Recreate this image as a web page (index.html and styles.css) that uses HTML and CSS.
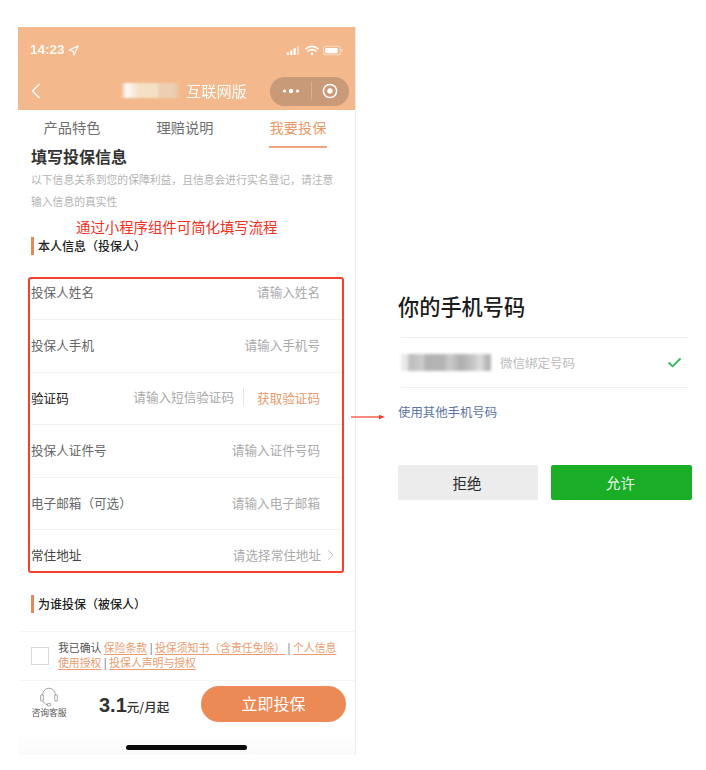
FILE: index.html
```html
<!DOCTYPE html>
<html lang="zh">
<head>
<meta charset="utf-8">
<title>小程序组件</title>
<link rel="stylesheet" href="styles.css">
</head>
<body>
<div class="canvas">
  <section class="phone">
    <header class="head">
      <div class="status">
        <div class="time">14:23
          <svg class="loc" width="11" height="11" viewBox="0 0 10 10"><path d="M9.200.8 1 4.600l3.600.8.8 3.700z" fill="none" stroke="#fff" stroke-width="1.100" stroke-linejoin="round"/></svg>
        </div>
        <div class="sys">
          <svg width="15" height="9" viewBox="0 0 12 8" fill="#fff"><rect x="0" y="5.500" width="2" height="2.500" rx=".4"/><rect x="3" y="4" width="2" height="4" rx=".4"/><rect x="6" y="2" width="2" height="6" rx=".4"/><rect x="9" y="0" width="2" height="8" rx=".4" opacity=".45"/></svg>
          <svg width="14" height="11" viewBox="0 0 13 10" fill="none" stroke="#fff" stroke-linecap="round"><path d="M1 3.400a7.800 7.800 0 0 1 11 0" stroke-width="1.500"/><path d="M3 5.600a5 5 0 0 1 7 0" stroke-width="1.500"/><circle cx="6.500" cy="8" r="1.100" fill="#fff" stroke="none"/></svg>
          <svg width="21" height="11" viewBox="0 0 20 10"><rect x=".5" y="1" width="16" height="8" rx="2.200" fill="none" stroke="#fff" stroke-opacity=".5"/><rect x="2" y="2.500" width="12" height="5" rx="1" fill="#fff"/><rect x="17.600" y="3.600" width="1.200" height="2.800" rx=".6" fill="#fff" fill-opacity=".5"/></svg>
        </div>
      </div>
      <div class="nav">
        <svg class="back" width="10" height="16" viewBox="0 0 10 16"><path d="M8.500 1 1.500 8l7 7" fill="none" stroke="#fff" stroke-width="1.400"/></svg>
        <div class="nav-title"><span class="smudge"></span>互联网版</div>
        <div class="capsule">
          <svg width="18" height="6" viewBox="0 0 18 6" fill="#fff"><circle cx="2.500" cy="3" r="1.600"/><circle cx="9" cy="3" r="2.200"/><circle cx="15.500" cy="3" r="1.600"/></svg>
          <span class="cap-div"></span>
          <svg width="16" height="16" viewBox="0 0 16 16"><circle cx="8" cy="8" r="6.600" fill="none" stroke="#fff" stroke-width="1.500"/><circle cx="8" cy="8" r="2.700" fill="#fff"/></svg>
        </div>
      </div>
    </header>

    <nav class="tabs">
      <div class="tab">产品特色</div>
      <div class="tab">理赔说明</div>
      <div class="tab on">我要投保</div>
    </nav>

    <main class="content">
      <h1 class="form-title">填写投保信息</h1>
      <p class="intro">以下信息关系到您的保障利益，且信息会进行实名登记，请注意</p>
      <p class="intro">输入信息的真实性</p>
      <p class="note">通过小程序组件可简化填写流程</p>
      <h2 class="sec">本人信息（投保人）</h2>
      <div class="box">
        <div class="row first"><span class="lab">投保人姓名</span><span class="ph">请输入姓名</span></div>
        <div class="row"><span class="lab">投保人手机</span><span class="ph">请输入手机号</span></div>
        <div class="row"><span class="lab dark">验证码</span><span class="ph code">请输入短信验证码</span><span class="get">获取验证码</span></div>
        <div class="row"><span class="lab">投保人证件号</span><span class="ph">请输入证件号码</span></div>
        <div class="row"><span class="lab">电子邮箱（可选）</span><span class="ph">请输入电子邮箱</span></div>
        <div class="row last"><span class="lab dark2">常住地址</span><span class="ph addr">请选择常住地址</span>
          <svg class="chev" width="7" height="12" viewBox="0 0 7 12"><path d="M1 1l5 5-5 5" fill="none" stroke="#c4c4c4" stroke-width="1"/></svg>
        </div>
      </div>
      <h2 class="sec sec2">为谁投保（被保人）</h2>
    </main>

    <div class="agree">
      <span class="check"></span>
      <div class="terms">
        <p class="line"><span>我已确认</span> <a>保险条款</a> <i>|</i> <a>投保须知书（含责任免除）</a> <i>|</i> <a>个人信息</a></p>
        <p class="line"><a>使用授权</a> <i>|</i> <a>投保人声明与授权</a></p>
      </div>
    </div>

    <footer class="bar">
      <div class="service">
        <svg width="20" height="20" viewBox="0 0 20 21" fill="none" stroke="#8a8a8a" stroke-width=".8"><path d="M3.500 9V7.800a6.500 6.500 0 0 1 13 0V9"/><rect x="1.200" y="8" width="2.800" height="7" rx="1.300"/><rect x="16" y="8" width="2.800" height="7" rx="1.300"/><path d="M4 15c1 2.600 3 3.500 5 3.500"/><rect x="8" y="17.300" width="4" height="2.400" rx="1.200"/></svg>
        <span>咨询客服</span>
      </div>
      <div class="price"><b>3.1</b><span class="yuan">元</span><span class="per">/月起</span></div>
      <button class="buy">立即投保</button>
    </footer>
    <div class="home"><span class="home-bar"></span></div>
  </section>

  <section class="auth">
    <h2 class="auth-title">你的手机号码</h2>
    <div class="num-row">
      <span class="blur-num"></span>
      <span class="num-note">微信绑定号码</span>
      <svg class="tick" width="15" height="11" viewBox="0 0 15 11"><path d="M1.500 5.500 5.500 9.300 13.500 1.500" fill="none" stroke="#2fb95a" stroke-width="1.800"/></svg>
    </div>
    <a class="other">使用其他手机号码</a>
    <div class="btns">
      <button class="btn no">拒绝</button>
      <button class="btn yes">允许</button>
    </div>
    <svg class="arrow" width="34" height="6" viewBox="0 0 34 6"><path d="M0 3h29" stroke="#f0402c" stroke-width="1.200"/><path d="M28 .8 34 3l-6 2.200z" fill="#f0402c"/></svg>
  </section>
</div>
</body>
</html>
```
FILE: styles.css
```css
* { box-sizing: border-box; }
html, body { margin: 0; padding: 0; background: #fff; }
body {
  width: 706px;
  height: 770px;
  overflow: hidden;
  font-family: "Noto Sans CJK SC", "Liberation Sans", sans-serif;
}
h1, h2, p { margin: 0; font-weight: normal; }
.canvas {
  display: flex;
  align-items: flex-start;
  padding: 27px 0 0 18px;
}

/* phone */
.phone {
  width: 338px;
  height: 728px;
  display: flex;
  flex-direction: column;
  border-right: 1px solid #ececec;
  background: #fff;
  flex: none;
}
.head { background: #f3b88c; height: 83px; flex: none; }
.status {
  height: 46px;
  padding: 15px 11px 0 12px;
  display: flex;
  justify-content: space-between;
  align-items: flex-start;
  color: #fff;
}
.time {
  font-family: "Liberation Sans", sans-serif;
  font-size: 13.500px;
  line-height: 16px;
  font-weight: bold;
  display: flex;
  align-items: center;
  gap: 3px;
  opacity: .93;
}
.sys { display: flex; align-items: center; gap: 4px; padding-top: 3px; }
.nav {
  height: 30px;
  display: flex;
  align-items: center;
  padding: 0 6px 0 13px;
  margin-top: 3px;
}
.back { flex: none; }
.nav-title {
  color: #fff;
  font-size: 15.200px;
  line-height: 28px;
  padding-bottom: 2px;
  display: flex;
  align-items: center;
  margin-left: 80px;
  flex: 1;
  opacity: .95;
}
.smudge {
  width: 65px;
  height: 15px;
  background: linear-gradient(90deg, #f3b88c 0, #fff 8%, #f5e3c8 28%, #f5e3c8 55%, #eccfb4 60%, #ecd2b8 80%, #f3b88c 92%);
  filter: blur(1px);
}
.capsule {
  width: 79px;
  height: 29px;
  border-radius: 15px;
  background: #c89a78;
  display: flex;
  align-items: center;
  justify-content: space-between;
  padding: 0 11px 0 12px;
  flex: none;
}
.cap-div { width: 1px; height: 18px; background: rgba(255,255,255,.22); }

/* tabs */
.tabs {
  height: 38px;
  flex: none;
  display: flex;
  padding-left: 25px;
  gap: 55px;
}
.tab {
  width: 58px;
  font-size: 14.200px;
  line-height: 35px;
  height: 38px;
  text-align: center;
  color: #6e6e6e;
  white-space: nowrap;
}
.tab.on { color: #e99a68; border-bottom: 2px solid #f0a67a; }

/* form */
.content { padding: 0 0 0 13px; height: 483px; flex: none; }
.form-title {
  font-size: 16px;
  line-height: 20px;
  font-weight: 700;
  color: #333;
  margin-top: -2px;
}
.intro {
  font-size: 10.800px;
  line-height: 22px;
  color: #b4b4b4;
  white-space: nowrap;
}
.form-title + .intro { margin-top: 2px; }
.note {
  font-size: 14.400px;
  line-height: 20px;
  color: #f2301e;
  margin: 5px 0 0 45px;
}
.sec {
  font-size: 12px;
  line-height: 18px;
  font-weight: 500;
  color: #222;
  border-left: 3px solid #e5875a;
  padding-left: 4px;
}
.box {
  width: 316px;
  height: 296px;
  margin: 22px 0 0 -3px;
  border: 2px solid #f4402f;
  border-radius: 3px;
  padding-left: 1px;
  display: flex;
  flex-direction: column;
}
.row {
  height: 52.500px;
  flex: none;
  display: flex;
  align-items: center;
  border-bottom: 1px solid #f2f2f2;
  padding: 0 22px 2px 0;
  font-size: 12.600px;
}
.row.first { height: 41px; padding-bottom: 15px; }
.row.last { height: 40px; padding: 9px 8px 0 0; border-bottom: 0; }
.lab { color: #666; flex: 1; white-space: nowrap; }
.lab.dark { color: #222; }
.lab.dark2 { color: #444; }
.ph { color: #aaa; white-space: nowrap; }
.ph.code { border-right: 1px solid #e4e4e4; padding-right: 9px; line-height: 18px; margin-right: 13px; }
.ph.addr { margin-right: 6px; }
.get { color: #e59a6c; white-space: nowrap; }
.chev { flex: none; }
.sec2 { margin-top: 22px; }

.agree {
  height: 50px;
  flex: none;
  border-top: 1px solid #f5f5f5;
  border-bottom: 1px solid #f5f5f5;
  display: flex;
  align-items: center;
  padding: 0 17px 2px 13px;
}
.check {
  width: 18px;
  height: 18px;
  border: 1px solid #d8d8d8;
  flex: none;
  margin-right: 9px;
  margin-top: 2px;
}
.terms {
  font-size: 10.850px;
  line-height: 15px;
  color: #555;
  white-space: nowrap;
}
.line i { font-style: normal; color: #666; }
.terms a { color: #ea9c70; text-decoration: underline; text-underline-offset: 1.500px; }

.bar {
  height: 51px;
  flex: none;
  display: flex;
  align-items: center;
  padding: 0 9px 6px 12px;
}
.service {
  width: 38px;
  display: flex;
  flex-direction: column;
  align-items: center;
  font-size: 8.800px;
  line-height: 11px;
  color: #555;
  white-space: nowrap;
  margin-top: -3px;
}
.price {
  margin-left: 31px;
  margin-top: 4px;
  display: flex;
  align-items: baseline;
  color: #333;
  white-space: nowrap;
  flex: 1;
}
.price b { font-family: "Liberation Sans", sans-serif; font-size: 20px; font-weight: bold; }
.yuan { font-size: 12.500px; font-weight: 500; }
.per { font-size: 12.500px; font-weight: 500; }
.buy {
  width: 145px;
  height: 36px;
  border: 0;
  border-radius: 18px;
  background: #ec8a56;
  color: #fff;
  font: inherit;
  font-size: 16px;
  padding: 0 0 2px;
}
.home {
  flex: 1;
  display: flex;
  justify-content: center;
  align-items: flex-start;
  padding-top: 13px;
  background: linear-gradient(#fff, #fafafa);
}
.home-bar { width: 121px; height: 4.500px; border-radius: 3px; background: #0a0a0a; }

/* right */
.auth {
  width: 294px;
  margin: 264px 0 0 42px;
  flex: none;
  position: relative;
}
.auth-title {
  font-size: 21.200px;
  line-height: 30px;
  font-weight: 500;
  color: #1c1c1c;
  white-space: nowrap;
}
.num-row {
  margin: 16px 3px 0 3px;
  height: 51px;
  border-top: 1px solid #f0f0f0;
  border-bottom: 1px solid #f0f0f0;
  display: flex;
  align-items: center;
}
.blur-num {
  width: 90px;
  height: 17px;
  background: linear-gradient(90deg, #e6e6e6 0, #e6e6e6 6%, #b0b0b0 10%, #c4c4c4 24%, #a4a4a4 28%, #a8a8a8 48%, #c4c4c4 54%, #a0a0a0 66%, #bcbcbc 80%, #d8d8d8 88%, #a8a8a8 96%);
  filter: blur(1.500px);
  opacity: .85;
}
.num-note { margin-left: 9px; font-size: 12.500px; color: #bcbcbc; flex: 1; white-space: nowrap; }
.tick { flex: none; margin-right: 7px; }
.other {
  display: block;
  margin-top: 15px;
  font-size: 12.400px;
  line-height: 18px;
  color: #5c74a0;
}
.btns { display: flex; gap: 13px; margin-top: 44px; }
.btn {
  height: 35px;
  border: 0;
  border-radius: 2px;
  font: inherit;
  font-size: 14.500px;
  padding: 0 2px 0 0;
}
.btn.no { width: 140px; background: #ececec; color: #2a2a2a; }
.btn.yes { width: 141px; background: #1aad26; color: #e9f7ea; }
.arrow { position: absolute; left: -47px; top: 123px; }
```
